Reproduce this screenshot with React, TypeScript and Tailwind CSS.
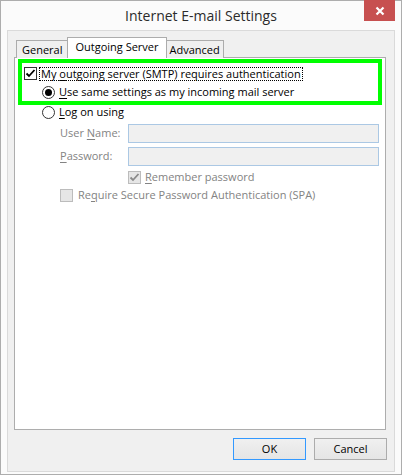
import React from "react";

const font = "font-['Open_Sans','Noto_Sans',sans-serif]";

function Check({ disabled }: { disabled?: boolean }) {
  return (
    <span
      className={`w-[13px] h-[13px] shrink-0 border flex items-center justify-center ${
        disabled ? "border-[#bcbcbc] bg-[#e6e6e6]" : "border-[#333] bg-white"
      }`}
    >
      <svg width="11" height="11" viewBox="0 0 11 11">
        <path
          d="M1.5 5.5 L4 8 L9.5 2"
          fill="none"
          stroke={disabled ? "#8a8a8a" : "#000"}
          strokeWidth="1.8"
        />
      </svg>
    </span>
  );
}

function EmptyCheck() {
  return <span className="w-[13px] h-[13px] shrink-0 border border-[#bcbcbc] bg-[#e6e6e6]" />;
}

function Radio({ on }: { on?: boolean }) {
  return (
    <span className="w-[13px] h-[13px] shrink-0 rounded-full border border-[#333] bg-white flex items-center justify-center">
      {on && <span className="w-[7px] h-[7px] rounded-full bg-black" />}
    </span>
  );
}

function Key({ children }: { children: React.ReactNode }) {
  return <span className="underline underline-offset-[2px] decoration-1">{children}</span>;
}

export default function App() {
  return (
    <div className={`w-[402px] h-[475px] border border-[#adadad] bg-[#fbfbfb] flex flex-col text-[11px] text-black ${font}`}>
      {/* Title bar */}
      <div className="h-[29px] shrink-0 relative flex items-center justify-center">
        <span className="text-[14px] text-[#2b2b2b] -mt-[1px]">Internet E-mail Settings</span>
        <div className="absolute right-[6px] top-[-1px] w-[31px] h-[21px] bg-[#c75050] flex items-center justify-center">
          <svg width="10" height="10" viewBox="0 0 10 10">
            <path d="M1.5 1.5 L8.5 8.5 M8.5 1.5 L1.5 8.5" stroke="#fff" strokeWidth="2.2" />
          </svg>
        </div>
      </div>

      {/* Client area */}
      <div className="flex-1 mx-[6px] mb-[2px] border border-[#dadada] bg-[#f0f0f0] flex flex-col pl-[6px] pr-[8px] pt-[7px]">
        {/* Tabs */}
        <div className="h-[20px] flex items-end pl-[2px] -mb-px relative z-10">
          <div className="h-[18px] px-[5px] border border-[#acacac] border-b-0 bg-[#f0f0f0] flex items-center pt-[1px]">General</div>
          <div className="h-[21px] px-[7px] -ml-px border border-[#acacac] border-b-0 bg-white flex items-start pt-[1px]">Outgoing Server</div>
          <div className="h-[18px] px-[3px] -ml-px border border-[#acacac] border-b-0 bg-[#f0f0f0] flex items-center pt-[1px]">Advanced</div>
        </div>

        {/* Panel */}
        <div className="flex-1 bg-white border border-[#adadad] flex flex-col pl-[3px] pt-[1px]">
          <div className="w-[364px] border-[4px] border-[#00ff00] flex flex-col">
            <div className="h-[21px] flex items-center pl-[2px] gap-[2px]">
              <Check />
              <span className="border border-dotted border-black px-[1px] leading-[12px] h-[14px] flex items-center">
                My&nbsp;<Key>o</Key>utgoing server (SMTP) requires authentication
              </span>
            </div>
            <div className="h-[17px] flex items-center pl-[20px] gap-[4px]">
              <Radio on />
              <span>
                <Key>U</Key>se same settings as my incoming mail server
              </span>
            </div>
          </div>

          <div className="h-[15px] flex items-center pl-[24px] gap-[4px]">
            <Radio />
            <span>
              <Key>L</Key>og on using
            </span>
          </div>

          <div className="mt-[4px] flex items-center pl-[42px] text-[#838383]">
            <span className="w-[68px]">
              User <Key>N</Key>ame:
            </span>
            <div className="w-[251px] h-[19px] border border-[#abc8e4] bg-[#f0f0f0]" />
          </div>
          <div className="mt-[4px] flex items-center pl-[42px] text-[#838383]">
            <span className="w-[68px]">
              <Key>P</Key>assword:
            </span>
            <div className="w-[251px] h-[19px] border border-[#abc8e4] bg-[#f0f0f0]" />
          </div>

          <div className="h-[17px] mt-[3px] flex items-center pl-[110px] gap-[4px] text-[#838383]">
            <Check disabled />
            <span>
              <Key>R</Key>emember password
            </span>
          </div>
          <div className="h-[18px] flex items-center pl-[42px] gap-[5px] text-[#838383]">
            <EmptyCheck />
            <span>
              Re<Key>q</Key>uire Secure Password Authentication (SPA)
            </span>
          </div>
        </div>

        {/* Buttons */}
        <div className="h-[22px] mt-[8px] mb-[11px] flex justify-end gap-[8px] -mr-[1px]">
          <button className="w-[73px] h-[22px] border border-[#3399ff] bg-gradient-to-b from-[#f0f0f0] to-[#e5e5e5] text-black">
            OK
          </button>
          <button className="w-[73px] h-[22px] border border-[#acacac] bg-gradient-to-b from-[#f0f0f0] to-[#e5e5e5] text-black">
            Cancel
          </button>
        </div>
      </div>
    </div>
  );
}
